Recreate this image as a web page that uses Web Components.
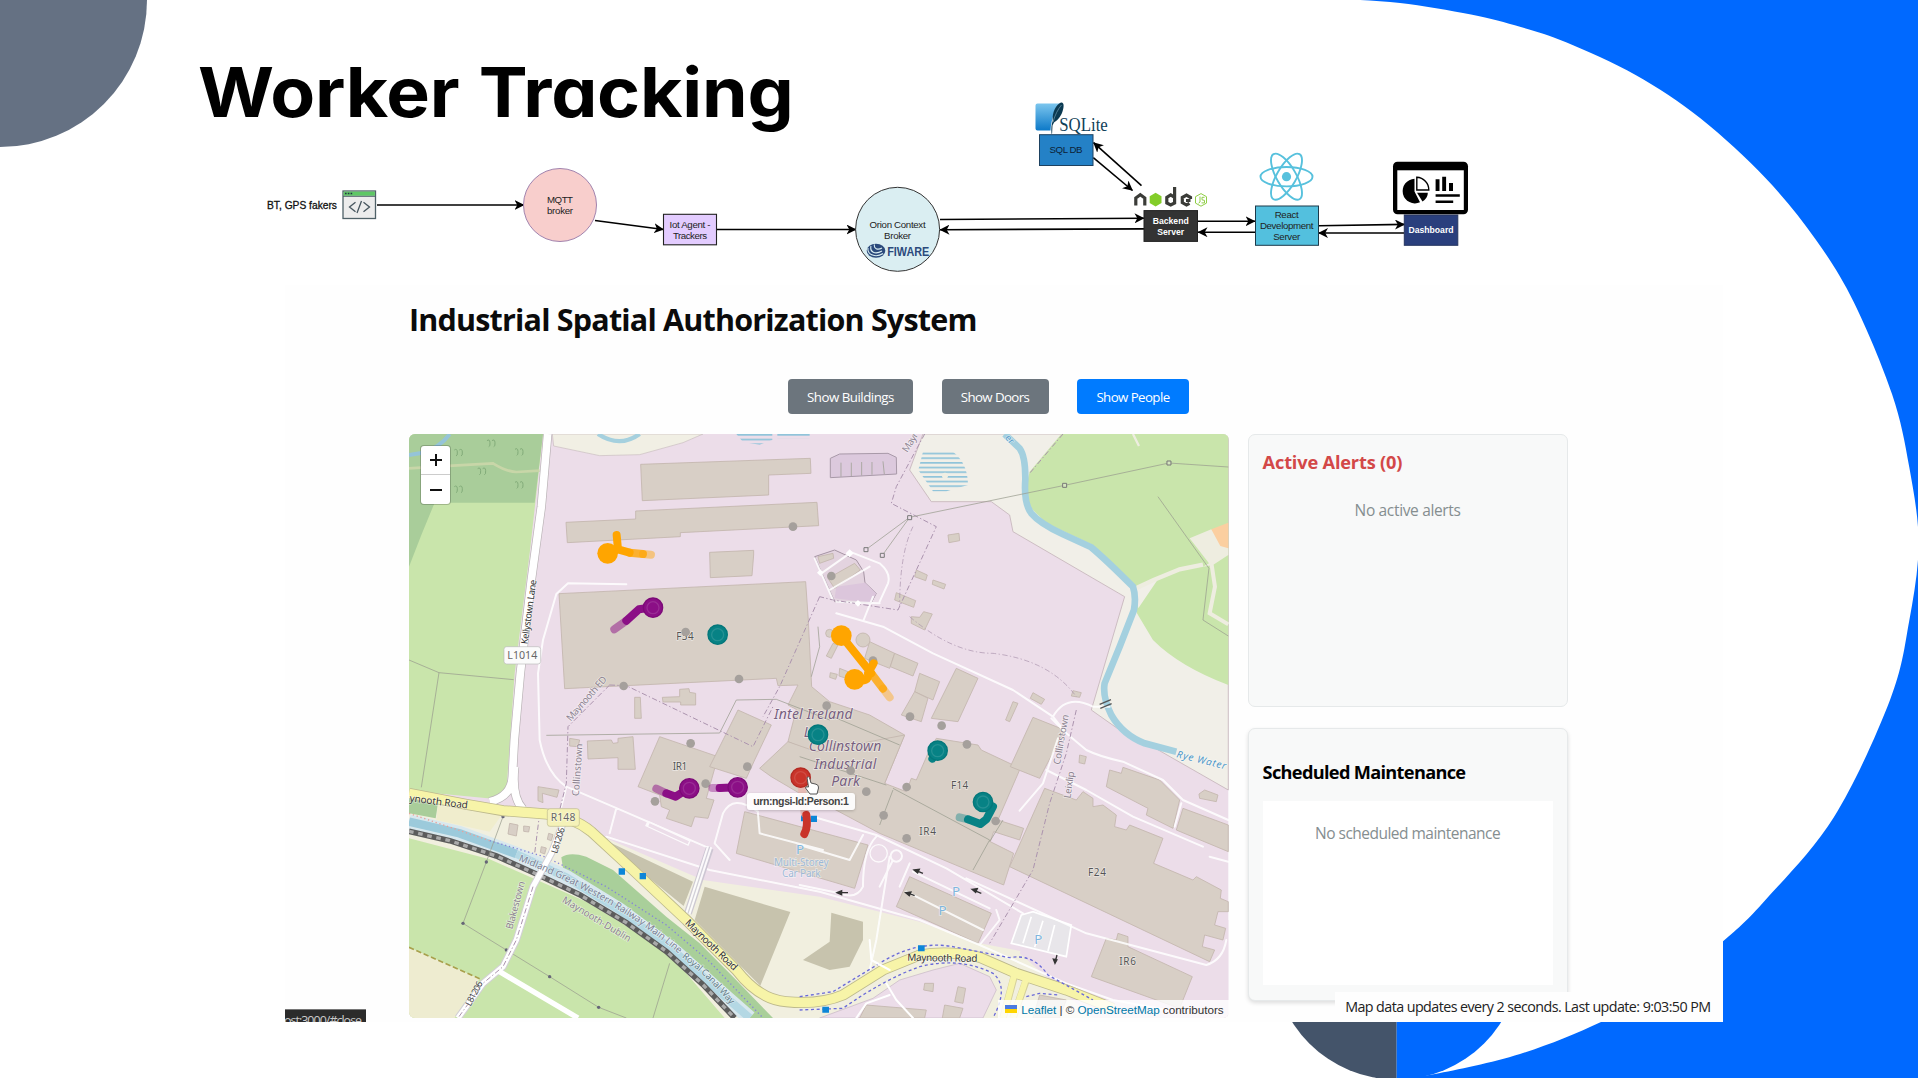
<!DOCTYPE html>
<html lang="en">
<head>
<meta charset="utf-8">
<title>Worker Tracking</title>
<style>
html,body{margin:0;padding:0;width:1918px;height:1078px;overflow:hidden;background:#fff}
</style>
</head>
<body>
<tracking-slide></tracking-slide>
<script>
const define = (name, html, setup) => customElements.define(name, class extends HTMLElement {
  constructor() {
    super();
    const t = document.createElement('template');
    t.innerHTML = html;
    this.attachShadow({mode: 'open'}).append(t.content.cloneNode(true));
  }
  connectedCallback() { if (setup) setup.call(this, this.shadowRoot); }
});

/* One line of text tracked out (or in) to a given width */
define('fit-text', `<style>:host{display:block;white-space:nowrap;width:max-content}</style><span><slot></slot></span>`, function (root) {
  const span = root.querySelector('span');
  const want = +this.getAttribute('w');
  const n = this.textContent.length;
  this.style.letterSpacing = ((want - span.offsetWidth) / n) + 'px';
});

/* Slide backdrop: blue field, white blob, corner discs */
define('slide-backdrop', `
<style>:host{display:block;position:absolute;inset:0}svg{display:block}</style>
<svg width="1918" height="1078" viewBox="0 0 1918 1078">
  <path d="M1300 0H1918V1078H1396.700V500H1300Z" fill="#0069ff"/>
  <path id="blob" fill="#fff"/>
  <circle r="147" fill="#657183"/>
  <path d="M1396.7 832.3A123.7 123.7 0 0 0 1396.7 1079.7Z" fill="#44546a"/>
  <path d="M1396.7 832.3A123.7 123.7 0 0 1 1396.7 1079.7Z" fill="#0069ff"/>
</svg>`, root => {
  const p = [[1340,-1],[1400,3],[1471,14.5],[1520.8,27],[1566.7,42.5],[1635.6,75],[1700.7,118.6],[1765.7,178.3],[1815.5,239.2],[1853.7,302],[1892,394],[1909.2,466.8],[1918.6,543],[1909.2,621],[1890,700],[1834,817],[1765.4,900],[1723,941.3],[1665,985],[1601,1022],[1520,1054],[1435,1074],[1396,1078]];
  let d = `M0 -1H${p[0][0]}`;
  for (let i = 0; i < p.length - 1; i++) {
    const a = p[i - 1] || p[i], b = p[i], c = p[i + 1], e = p[i + 2] || c;
    d += `C${b[0] + (c[0] - a[0]) / 6} ${b[1] + (c[1] - a[1]) / 6} ${c[0] - (e[0] - b[0]) / 6} ${c[1] - (e[1] - b[1]) / 6} ${c[0]} ${c[1]}`;
  }
  root.getElementById('blob').setAttribute('d', d + 'L1396 1079H0Z');
});

/* Data-flow diagram: nodes on a free canvas, in slide coordinates */
define('flow-diagram', `
<style>
:host{display:block}svg{display:block}
text{font:9.700px "Liberation Sans",Arial,sans-serif;fill:#222;text-anchor:middle}
.b{font-weight:bold;fill:#fff;font-size:9.500px}
.a line{stroke:#000;stroke-width:1.6;marker-end:url(#h)}
</style>
<svg width="1230" height="180" viewBox="260 100 1230 180">
  <defs>
    <marker id="h" viewBox="0 0 10 10" refX="9.5" refY="5" markerWidth="10" markerHeight="10" markerUnits="userSpaceOnUse" orient="auto"><path d="M0 0L10 5L0 10L2.8 5Z"/></marker>
    <linearGradient id="sq" x2="0" y2="1"><stop offset="0" stop-color="#7cc6ee"/><stop offset="1" stop-color="#0c79c8"/></linearGradient>
  </defs>
  <g class="a">
    <line x1="377" y1="205" x2="524" y2="205"/><line x1="595" y1="220.5" x2="663.5" y2="229.5"/>
    <line x1="717" y1="229.5" x2="856" y2="229.5"/>
    <line x1="940" y1="219.5" x2="1144" y2="218.3"/><line x1="1144" y1="228.9" x2="940" y2="229.7"/>
    <line x1="1093.3" y1="157.7" x2="1132.5" y2="190.5"/><line x1="1141.5" y1="185.7" x2="1093.5" y2="142.7"/>
    <line x1="1197.6" y1="221.2" x2="1255" y2="221.2"/><line x1="1255" y1="232.2" x2="1198" y2="232.2"/>
    <line x1="1318.5" y1="225.7" x2="1404.5" y2="224.4"/><line x1="1404" y1="233" x2="1318.5" y2="233"/>
  </g>
  <text x="302" y="208.7" textLength="70" lengthAdjust="spacingAndGlyphs" style="font-size:10.500px;fill:#111;stroke:#111;stroke-width:.3">BT, GPS fakers</text>
  <rect x="343" y="191" width="32.5" height="27.5" fill="#ececec" stroke="#4f6168" stroke-width="1.3"/>
  <rect x="343.6" y="191.6" width="31.3" height="4.2" fill="#5ec765"/><path d="M343 196.3h32.5" stroke="#4f6168"/>
  <path d="M345 193.6h1.6M347.8 193.6h1.6M350.6 193.6h1.6" stroke="#234" stroke-width="1.5"/>
  <path d="M355.500 202.300l-6 4.700l6 4.700M363.500 202.300l6 4.700l-6 4.700M361.500 201l-4.500 12" fill="none" stroke="#46555e" stroke-width="1.3"/>
  <circle cx="560" cy="205" r="36.5" fill="#f8cecc" stroke="#a183ae"/>
  <text x="560" y="202.8" textLength="26">MQTT</text><text x="560" y="214.3" textLength="26">broker</text>
  <rect x="663.5" y="214.300" width="53" height="30.500" fill="#e3ccff" stroke="#222" stroke-width="1.1"/>
  <text x="690" y="227.5" textLength="41">Iot Agent -</text><text x="690" y="239" textLength="34">Trackers</text>
  <circle cx="897.6" cy="229.3" r="42" fill="#daeef2" stroke="#333"/>
  <text x="897.6" y="227.5" textLength="56">Orion Context</text><text x="897.6" y="239" textLength="27">Broker</text>
  <ellipse cx="876" cy="250.800" rx="9.300" ry="7" fill="#2b4a7c"/>
  <path d="M871 246c-1.500 6 4 9 11 5M874.500 244.500c-1 4 3 6 7.500 3.500M868 248c-1 7 8 10 15 5.500" fill="none" stroke="#daeef2" stroke-width="1.100"/>
  <text x="908.200" y="256" textLength="42" lengthAdjust="spacingAndGlyphs" style="font:bold 13px 'Liberation Sans',Arial,sans-serif;fill:#2b4a7c">FIWARE</text>
  <path d="M1037.500 103.500h22.500c-5 6-8.500 14-9.500 27h-13a2 2 0 0 1-2-2v-23a2 2 0 0 1 2-2Z" fill="url(#sq)"/>
  <path d="M1051.500 134c-.5-6 0-10 1.200-13C1052 112 1056 105 1061 102.600c3.500-.6 3 5 1.500 9-2 6-6 9.500-8.500 11l-1.500 3-.4 8Z" fill="#0b3a52"/><path d="M1053 122c2-7 5-13 8.500-17" fill="none" stroke="#7fa9bd" stroke-width=".6"/>
  <text x="1083.500" y="130.700" textLength="48.500" lengthAdjust="spacingAndGlyphs" style="font:18px 'Liberation Serif',serif;fill:#0f4058">SQLite</text>
  <rect x="1039.500" y="134.700" width="53.500" height="30.800" fill="#2481c6" stroke="#1d4160"/>
  <text x="1066" y="153" textLength="33" style="fill:#0c2136">SQL DB</text>
  <g fill="none" stroke="#3b3c38" stroke-width="3.200">
    <path d="M1135.800 205.500v-7.500l4.500-3.200 4.500 3.200v7.500"/>
    <path d="M1174.600 187v16l-3.900 2-3.900-2v-5.600l3.900-2.400 3.900 2.400"/>
    <path d="M1190.500 199v-1.500l-4-2.300-4.200 2.300v5l4.200 2.500 3-1.700M1186 200.500h4.500"/>
  </g>
  <path d="M1155.600 192.800l5.900 3.400v6.800l-5.900 3.400-5.900-3.400v-6.800Z" fill="#83cd29"/>
  <path d="M1201 193.600l5.500 3.100v6.400l-5.500 3.100-5.500-3.100v-6.400Z" fill="none" stroke="#8fce45" stroke-width="1"/>
  <path d="M1200 196.500v5.500l-1.500 1.200M1204.500 197.300h-2.500v2.500l2.500.6v2.500h-3" fill="none" stroke="#8fce45" stroke-width="1"/>
  <rect x="1144" y="210.600" width="53.500" height="30.800" fill="#333" stroke="#222"/>
  <text class="b" x="1170.700" y="223.500" textLength="36" lengthAdjust="spacingAndGlyphs">Backend</text><text class="b" x="1170.700" y="235" textLength="27" lengthAdjust="spacingAndGlyphs">Server</text>
  <g fill="none" stroke="#57c1dd" stroke-width="1.900">
    <ellipse cx="1286.500" cy="176.700" rx="26" ry="9.700"/>
    <ellipse cx="1286.500" cy="176.700" rx="26" ry="9.700" transform="rotate(60 1286.500 176.700)"/>
    <ellipse cx="1286.500" cy="176.700" rx="26" ry="9.700" transform="rotate(120 1286.500 176.700)"/>
  </g><circle cx="1286.500" cy="176.700" r="4.600" fill="#57c1dd"/>
  <rect x="1255.500" y="206" width="63" height="39.300" fill="#53c0de" stroke="#1d3a4a"/>
  <text x="1286.700" y="217.900" textLength="24">React</text><text x="1286.700" y="228.800" textLength="53.500">Development</text><text x="1286.700" y="240.300" textLength="27">Server</text>
  <rect x="1404.300" y="215" width="53.500" height="30.300" fill="#2a3f7d" stroke="#26355f"/>
  <text class="b" x="1431" y="233" textLength="45" lengthAdjust="spacingAndGlyphs">Dashboard</text>
  <rect x="1393" y="161.700" width="75" height="52.600" rx="4.500"/><rect x="1397.300" y="170.300" width="66.500" height="39.700" fill="#fff"/>
  <path d="M1414.500 191.500V178.800a12.300 12.300 0 1 0 5.500 23.500Z"/>
  <path d="M1416.800 190V177.300a12.500 12.500 0 0 1 12 12.700Z" fill="#fff" stroke="#000" stroke-width="1.400"/>
  <path d="M1417 192.800h10.800c0 4-2.500 7-5.300 8.800Z"/>
  <path d="M1435.600 179.300h3.900v11.700h-3.900ZM1442.200 176.700h3.900v14.300h-3.900ZM1449 183h4v8h-4ZM1435.600 194.300h24.200v2.500h-24.200ZM1435.600 200.500h17.600v2.500h-17.600Z"/>
</svg>`);

/* Street map artwork */
const bld = list => list.split('|').map(p => `<polygon points="${p}"/>`).join('');
define('street-map', `
<style>
:host{display:block}svg{display:block}
.bd{fill:#d8cfc6;stroke:#c3b6ad;stroke-width:2.500}
.w{fill:none;stroke:#fff;stroke-width:6;stroke-linecap:round;stroke-linejoin:round}
.ad{fill:none;stroke:#ab93ae;stroke-width:3;stroke-dasharray:16 7 4 7}
.gl{fill:none;stroke:#999c8e;stroke-width:2.200}
.pa{fill:none;stroke:#6a6ad8;stroke-width:4;stroke-dasharray:9 8}
text{font:30px "Noto Sans",sans-serif;fill:#555;text-anchor:middle;stroke:#fff;stroke-opacity:.5;stroke-width:4;paint-order:stroke}
.s{font-size:29px;fill:#8c8290}
.it{font-style:italic;fill:#775f7f;font-size:42px}
.pk{fill:#7fb6de;font-size:40px}
.sq{fill:#0d86d8}
.tr{fill:none;stroke-linecap:round;stroke-linejoin:round;stroke-width:24}
</style>
<svg width="819.300" height="584" viewBox="28 42 2458 1752" preserveAspectRatio="none">
<defs>
  <pattern id="hz" width="20" height="14" patternUnits="userSpaceOnUse"><rect width="20" height="5" fill="#8fc4da"/></pattern>
  <path id="gw" d="M356 1322C520 1385 700 1480 850 1612"/>
  <path id="rc" d="M846 1612Q940 1680 1020 1790"/>
</defs>
<rect x="28" y="42" width="2458" height="1752" fill="#ecdde9"/>
<path d="M28 42H430L390 400L345 760L322 1090Q318 1112 280 1136L28 1112Z" fill="#c9e5ab"/>
<path d="M28 42H430L405 248H105L65 345L28 440Z" fill="#a9cd9a"/>
<path d="M28 105L60 100Q120 85 150 42" fill="none" stroke="#95c4d8" stroke-width="12"/>
<path d="M28 145L160 137L280 130Q320 155 350 156L420 152" fill="none" stroke="#c8d6a8" stroke-width="8"/>
<path class="gl" d="M28 720L118 758L342 779M118 758L65 1102"/>
<g fill="none" stroke="#82ab78" stroke-width="3"><path id="tf" d="M262 62q8-6 9 6t-4 12M277 62q8-6 9 6t-4 12"/><use href="#tf" x="-98" y="28"/><use href="#tf" x="84" y="26"/><use href="#tf" x="-28" y="84"/><use href="#tf" x="84" y="125"/><use href="#tf" x="-98" y="138"/></g>
<!-- river plain and fields -->
<path d="M458 42L462 78L600 107L720 104L850 68L910 42Z" fill="#f1efe4" stroke="#c9bcc0" stroke-width="2"/>
<path d="M595 42Q660 85 720 42" fill="none" stroke="#a5d0de" stroke-width="13"/>
<path d="M1010 42H1118V60L1080 74L1030 66ZM1133 42H1230V55H1133Z" fill="url(#hz)"/>
<path d="M1570 42L1530 150L1595 245H1775L1830 285L1840 335L2175 530L2075 870L2160 930L2250 975L2486 1110V42Z" fill="#f1efe8" stroke="#c5b5ba" stroke-width="2.500"/>
<path d="M1985 42L1890 155L1880 195L1890 260L1940 310L2080 375L2200 495L2212 580L2260 660Q2340 740 2486 795V42Z" fill="#c9e5ab"/>
<path d="M2204 500Q2250 492 2275 478L2216 565Z" fill="#f1efe8"/>
<path d="M2212 503L2262 480L2340 448L2410 434" fill="none" stroke="#eeede0" stroke-width="13"/>
<path d="M2370 355L2435 328L2486 385V405L2440 435L2410 440L2428 430Z" fill="#eeede0"/>
<path d="M2436 434L2446 500L2430 580L2486 613" fill="none" stroke="#eeede0" stroke-width="12"/>
<path d="M2435 328L2486 308V385L2462 378Z" fill="#fbcfa0"/>
<path class="gl" d="M2275 230L2428 445L2410 600L2486 648" stroke="#b0b69a"/>
<path d="M2200 42L2218 78" stroke="#eeede0" stroke-width="7"/>
<path d="M1570 95H1660Q1705 130 1705 195L1640 214H1600L1556 150Z" fill="url(#hz)"/><circle cx="1636" cy="167" r="9" fill="#f1efe4"/>
<path d="M1815 42L1860 85Q1878 110 1877 180Q1872 250 1895 280Q1920 310 1990 343L2075 382Q2120 420 2200 500Q2210 530 2203 570L2160 680L2115 790Q2108 830 2135 885Q2170 945 2235 970L2330 995" fill="none" stroke="#a4d0df" stroke-width="20"/>
<!-- southwest fields -->
<path d="M28 1130L320 1160L540 1210L620 1255L910 1380L1260 1430L1560 1505L1740 1570L1900 1600L1960 1690L2080 1794H28Z" fill="#f1efdf"/>
<path d="M28 1125L115 1150L108 1195L28 1180Z" fill="#a9cd9a"/>
<path d="M115 1155L310 1180L270 1235L110 1200Z" fill="#f0edcd"/>
<path d="M28 1255L270 1318L400 1375L560 1445L700 1530L830 1625L975 1794H28Z" fill="#c9e5ab"/>
<path d="M28 1582L240 1676L165 1794H28Z" fill="#eeecd0"/>
<path d="M28 1582L240 1676" stroke="#a8a04c" stroke-width="5" stroke-dasharray="16 8"/>
<path d="M485 1312Q510 1295 560 1310L640 1350L800 1490L900 1570L1000 1670L1120 1794H1040L850 1610L650 1450L490 1345Z" fill="#a9cf9a"/>
<path d="M620 1262L880 1385L852 1458L700 1335ZM915 1400L1172 1476L1082 1697L885 1500ZM1295 1478L1390 1505V1560L1350 1640L1290 1650L1210 1620L1290 1565Z" fill="#c7c3ad"/>
<path d="M1500 1680L1600 1650L1680 1630L1770 1670L1790 1710L1750 1794H1260L1420 1735Z" fill="#ecdde9" stroke="#c5b5c4" stroke-width="2"/>
<path d="M1860 1600L1940 1670L2020 1720L2330 1794H2486V1500L1900 1500Z" fill="#ecdde9"/>
<!-- canal and railway -->
<path d="M28 1205L180 1240L350 1302L500 1372L660 1470L820 1590L960 1715L1050 1794" fill="none" stroke="#d8e8ee" stroke-width="44"/>
<path d="M28 1205L180 1240L350 1302" fill="none" stroke="#9ccadb" stroke-width="26"/>
<path d="M350 1302L500 1372L660 1470L820 1590L960 1715L1050 1794" fill="none" stroke="#b4d8e4" stroke-width="24"/>
<path d="M270 1262L440 1312L620 1400L800 1515L930 1625L1090 1794" fill="none" stroke="#8585d8" stroke-width="4" stroke-dasharray="4 8"/>
<path d="M28 1180L270 1262" fill="none" stroke="#e9a09a" stroke-width="4" stroke-dasharray="4 8"/>
<path d="M28 1234L150 1262L290 1308L410 1362L540 1424L680 1508L800 1594L910 1694L1005 1794" fill="none" stroke="#5c5c5c" stroke-width="17"/>
<path d="M28 1234L150 1262L290 1308L410 1362L540 1424L680 1508L800 1594L910 1694L1005 1794" fill="none" stroke="#aaa" stroke-width="10" stroke-dasharray="14 14"/>
<path class="gl" d="M310 1190L260 1326L190 1510L320 1590L450 1670L597 1762L680 1794M810 1630L760 1794" stroke="#a9b694"/>
<g fill="#667"><circle cx="310" cy="1190" r="5"/><circle cx="260" cy="1326" r="5"/><circle cx="190" cy="1510" r="5"/><circle cx="320" cy="1590" r="5"/><circle cx="450" cy="1670" r="5"/><circle cx="597" cy="1762" r="5"/></g>
<!-- buildings -->
<g class="bd">${bld('723,133 1232,115 1234,160 1107,165 1107,225 728,242|499,307 708,297 708,273 1252,247 1257,317 842,338 842,350 503,368|930,397 1062,391 1062,405 1057,467 932,473|478,521 1218,485 1226,600 1236,800 1290,845 1410,885 1515,945 1455,1090 1165,965 1190,868 1165,855 1195,795 1135,797 1130,775 495,806|705,832 722,832 725,895 705,895|788,832 840,830 840,808 868,806 870,817 888,820 888,855 843,855 843,846 790,846')}</g>
<g transform="translate(1200 0)">
  <path d="M92 115L120 102L265 100L290 112L291 162L92 173Z" fill="#dcc9dd" stroke="#a899a8" stroke-width="3"/><path class="gl" d="M124 128v42M155 128v40M186 126v40M217 126v38M250 124l4 38"/>
  <path d="M45 410L105 390L170 420L192 455L196 488L230 520L215 548L105 545Z" fill="#e3d3df" stroke="#a594a3" stroke-width="3"/>
  <path d="M110 500L196 488L230 520L215 548L105 535Z" fill="#dcc6dc"/>
  <g class="bd">${bld('445,345 478,340 480,362 448,368|350,450 383,465 378,482 345,470|400,480 438,493 433,507 398,493|290,518 348,542 342,562 285,540|335,590 360,592 372,575 398,582 375,630 335,610|470,745 535,775 475,905 395,895|360,760 420,785 400,840 345,815|345,815 385,835 365,905 305,885|210,665 285,700 270,745 195,715|285,700 355,730 340,768 272,740|700,818 735,838 725,853 692,835|820,812 845,818 840,832 815,828|640,845 655,850 630,905 618,900|100,670 115,675 95,715 80,708|120,745 145,755 140,775 118,768|92,758 113,763 108,778 90,772|55,410 100,400 102,415 60,430|85,475 165,430 182,450 105,505')}
  <circle cx="190" cy="660" r="21"/><circle cx="90" cy="640" r="12"/></g>
</g>
<g class="bd" transform="translate(0 870)">${bld('563,93 635,90 640,100 655,98 655,85 700,80 707,178 655,178 655,143 565,147|780,80 955,140 920,265 943,270 925,325 885,320 875,350 800,325 810,300 785,290 780,255 715,230|1015,0 1115,45 1065,150 1040,205 930,170|415,230 478,240 472,262 428,250 430,278 415,272|510,85 540,90 535,110 510,108|330,340 355,345 350,378 325,372|372,348 390,350 387,366 372,364|447,370 460,374 455,392 443,388|425,410 440,414 435,432 422,427')}</g>
<g class="bd" transform="translate(1200 870)">${bld('-35,95 50,125 315,75 255,220 320,245 335,205 350,210 385,130 410,85 535,105 545,120 662,175 595,330 672,355 660,390 582,365 572,395 642,430 612,525 240,370 90,290 0,250 -85,200 -120,175|-165,305 205,405 165,535 -190,430|330,500 575,610 535,700 290,590|735,235 830,270 850,245 880,265 880,290 910,285 950,315 945,350 980,360 990,345 1090,385 1062,460 1180,510 1190,500 1265,540 1262,565 1286,575 1286,605 1255,605 1245,645 1278,655 1270,690 1215,675 1208,710 1245,720 1230,755 630,470|920,685 950,690 955,670 985,680 985,710 1178,800 1140,895 875,800|700,22 795,60 720,205 632,170|930,180 965,190 970,172 1080,210 1140,270 1120,355 1040,315 1045,295 920,230|1150,295 1286,345 1286,425 1130,360|1215,240 1255,255 1250,275 1200,265 1198,252|840,135 860,140 855,162 838,158|375,820 402,820 400,845 372,840|475,830 498,835 490,880 465,875|435,885 490,895 480,924 428,924|200,885 380,900 375,924 180,924|720,855 800,870 780,924 700,924')}</g>
<path d="M1865 1485L1900 1475L2015 1515L2000 1610L1835 1570Z" fill="#e8e6ea" stroke="#fff" stroke-width="5"/>
<path d="M1895 1490l-25 80M1930 1502l-25 80M1965 1515l-20 78" stroke="#fff" stroke-width="5"/>
<path class="gl" d="M1480 1105L1770 1260L1720 1350M1200 1010L1460 1095M1480 1110L1440 1215M1300 890L1500 975M1810 1200L1770 1265M1255 620L1260 680L1235 770M440 946L960 939L1010 840L1130 838L1290 900" stroke="#bdacb2"/>
<!-- minor roads -->
<g opacity=".85">
<path class="w" d="M680 493L505 490L470 522L430 660L415 760L420 960Q440 1060 500 1100L640 1160L930 1285M500 1100L485 1160M650 1165L630 1240M620 1250L930 1350L1260 1415L1560 1500L1740 1575L2000 1690L2140 1740L2300 1770M1310 580L1450 620L1600 700L1840 810L1960 890L2000 940M1960 890Q2000 820 2080 860L2130 860M1350 395L1440 430Q1475 460 1465 490L1440 545M1245 415L1300 540M1265 460L1350 400M1290 510L1410 440M1310 545L1440 550M1420 530L1392 600M1955 895L2000 940L2060 990Q2100 1010 2170 1025L2290 1080L2350 1140L2486 1200M1940 1050L2060 1110L2200 1190L2410 1280M1975 955L1930 1090L1860 1172M1240 1190L1430 1245L1640 1345L1870 1480M1700 1375L2060 1540L2420 1635Q2470 1620 2480 1560M1390 1245L1350 1320L1200 1275M1430 1250Q1390 1290 1390 1400Q1370 1440 1320 1420L1200 1395M1470 1310L1430 1560L1410 1650M1480 1320L1440 1400M1530 1330L1500 1400M1075 1180L1080 1240L1270 1290M1075 1175Q1000 1120 970 1180L945 1270L990 1320M1740 1575L1800 1500L1790 1470M1540 1355L1770 1465M1520 1415L1750 1530M2430 1310L2486 1325M2325 1220L2345 1150"/>
<circle cx="1490" cy="1308" r="17" fill="#ecdde9" stroke="#fff" stroke-width="6"/><circle cx="1437" cy="1300" r="26" fill="none" stroke="#fff" stroke-width="4"/>
<path d="M930 1285L865 1480" stroke="#c8c3d0" stroke-width="24"/><path d="M930 1280L865 1480" stroke="#fff" stroke-width="16"/><path d="M930 1280L865 1480" stroke="#cdcbd6" stroke-width="4"/>
<path d="M740 1210L870 1270" stroke="#fff" stroke-width="18"/><path d="M748 1214L866 1268" stroke="#ecdde9" stroke-width="10"/>
</g>
<path d="M2100 853l34-14M2102 865l34-14" stroke="#555" stroke-width="4"/>
<path class="ad" d="M630 795L505 920L500 1090L480 1170M630 795L680 797L1060 980L1120 860M1260 530L1140 800L1090 890M1575 42L1490 200L1475 250L1610 320L1495 570L1300 540L1260 530M2030 870L2000 1000L1950 1150L1900 1350L1770 1570M1990 42L1890 160"/>
<path d="M1530 590Q1660 700 1780 700Q1950 720 2030 830M1540 320Q1500 400 1500 560" class="ad" opacity=".7" stroke-dasharray="9 12"/>
<path class="gl" d="M1400 388L1530 292L1995 196L2308 129L2486 141M1530 292L1448 406"/>
<g fill="#ecdde9" stroke="#777" stroke-width="3"><path d="M1393 383h12v12h-12ZM1442 400h12v12h-12ZM1524 287h12v12h-12Z"/><path fill="#d5e6bf" d="M1989 190h12v12h-12ZM2302 123h12v12h-12Z"/></g>
<g fill="#fff"><path d="M1350 388l12 12-12 12-12-12ZM1262 448l10 10-10 10-10-10ZM1375 540l10 10-10 10-10-10Z"/></g>
<!-- L1014 -->
<path d="M444 42L425 260L395 480L362 760L344 960L338 1070Q335 1130 270 1145M345 1040Q335 1130 370 1168" fill="none" stroke="#b9b2b5" stroke-width="27"/>
<path d="M444 42L425 260L395 480L362 760L344 960L338 1070Q335 1130 270 1145M345 1040Q335 1130 370 1168" fill="none" stroke="#fff" stroke-width="23"/>
<path d="M490 1210L455 1300L400 1400L350 1560L310 1640L250 1690L175 1794" fill="none" stroke="#d3d0d6" stroke-width="22"/>
<path d="M490 1210L455 1300L400 1400L350 1560L310 1640L250 1690L175 1794M300 1655L535 1794" fill="none" stroke="#fff" stroke-width="16"/>
<path class="ad" d="M420 1180L405 1300M400 1400L350 1560L310 1640L250 1690L175 1794" stroke-width="2"/>
<!-- R148 -->
<g fill="none">
<path d="M28 1120L200 1153L310 1172L440 1182Q520 1190 575 1235L700 1350L860 1500L1010 1650Q1080 1740 1160 1745Q1260 1755 1330 1725L1450 1650L1560 1605Q1650 1590 1740 1612L1850 1660L2000 1710L2140 1765" stroke="#bdb98c" stroke-width="33"/>
<path d="M1845 1665L1810 1794M1880 1680L1840 1794" stroke="#d5d09a" stroke-width="22"/>
<path d="M1845 1660L1810 1794M1880 1675L1840 1794" stroke="#f7f4a8" stroke-width="18"/>
<path d="M28 1120L200 1153L310 1172L440 1182Q520 1190 575 1235L700 1350L860 1500L1010 1650Q1080 1740 1160 1745Q1260 1755 1330 1725L1450 1650L1560 1605Q1650 1590 1740 1612L1850 1660L2000 1710L2140 1765" stroke="#f7f4a8" stroke-width="28"/></g>
<path class="pa" d="M1200 1730L1300 1715L1440 1630Q1550 1560 1660 1580L1830 1613Q1900 1600 1945 1665L2080 1740M1200 1770L1330 1765Q1450 1680 1560 1640Q1680 1610 1780 1660Q1830 1700 1780 1794M1880 1730L1920 1720L1980 1725"/>
<path class="w" d="M1410 1560L1415 1620L1470 1650M1460 1690L1490 1740L1540 1794M1470 1725L1400 1750L1370 1794" stroke-width="5"/>
<g fill="#333" stroke="#333" stroke-width="4"><path d="M1345 1418h-28M1312 1418l14-6v12ZM1570 1360l-20-8M1543 1350l16-2-5 11ZM1745 1420l-20-8M1717 1408l16-2-5 11ZM1545 1427l-20-8M1518 1418l16-2-5 11ZM1972 1605l-4 16M1966 1630l-5-13 11 2Z"/></g>
<!-- labels -->
<text transform="translate(397 577) rotate(-82)" textLength="195" style="fill:#333;font-size:28px">Kellystown Lane</text>
<rect x="313" y="680" width="110" height="52" rx="8" fill="#fbfbfb" stroke="#bbb" stroke-width="2"/><text x="368" y="718" textLength="90" style="fill:#666;font-size:32px">L1014</text>
<text x="856" y="659" textLength="52">F34</text>
<text class="s" transform="translate(568 842) rotate(-49)" textLength="168">Maynooth ED</text>
<text class="s" transform="translate(1540 72) rotate(-58)" textLength="64">Mayr</text>
<text class="s" transform="translate(543 1050) rotate(-86)" textLength="158">Collinstown</text>
<text class="s" transform="translate(1994 960) rotate(-80)" textLength="152">Collinstown</text>
<text class="s" transform="translate(2018 1096) rotate(-82)" textLength="82">Leixlip</text>
<text class="s" transform="translate(357 1458) rotate(-75)" textLength="148">Blakestown</text>
<text transform="translate(484 1264) rotate(-73)" textLength="80" style="fill:#444;font-size:27px">L81206</text>
<text transform="translate(231 1725) rotate(-62)" textLength="80" style="fill:#444;font-size:27px">L81206</text>
<text transform="translate(116 1155) rotate(7)" textLength="176" style="fill:#333">ynooth Road</text>
<rect x="443" y="1166" width="96" height="53" rx="8" fill="#f5f2b8" stroke="#bdb98c" stroke-width="2"/><text x="490" y="1204" textLength="74" style="fill:#666;font-size:31px">R148</text>
<text x="841" y="1050" textLength="44">IR1</text>
<text x="1680" y="1107" textLength="52">F14</text><text x="1584" y="1245" textLength="50">IR4</text>
<text x="2092" y="1368" textLength="54">F24</text><text x="2184" y="1634" textLength="50">IR6</text>
<text transform="translate(928 1582) rotate(44)" textLength="205" style="fill:#333">Maynooth Road</text>
<text transform="translate(1628 1624) rotate(1)" textLength="210" style="fill:#333">Maynooth Road</text>
<text style="fill:#7d8296;font-size:29px;text-anchor:start"><textPath href="#gw" textLength="560">Midland Great Western Railway Main Line</textPath></text>
<text style="fill:#667f8b;font-size:28px;text-anchor:start"><textPath href="#rc" textLength="205">Royal Canal Way</textPath></text>
<text class="s" transform="translate(586 1506) rotate(31)" textLength="235">Maynooth-Dublin</text>
<text transform="translate(1824 64) rotate(50)" style="fill:#4f98c8;font-size:27px">er</text>
<text transform="translate(2403 1030) rotate(14)" textLength="152" style="fill:#4f98c8;font-style:italic">Rye Water</text>
<text class="it" x="1241" y="898" textLength="236">Intel Ireland</text><text class="it" x="1222" y="950">L</text>
<text class="it" x="1336" y="994" textLength="218">Collinstown</text><text class="it" x="1337" y="1046" textLength="186">Industrial</text><text class="it" x="1338" y="1099" textLength="86">Park</text>
<text class="pk" x="1201" y="1302">P</text><text class="pk" x="1669" y="1428">P</text><text class="pk" x="1629" y="1484">P</text><text class="pk" x="1916" y="1571">P</text>
<text x="1205" y="1338" textLength="164" style="fill:#9db9d6">Multi-Storey</text><text x="1205" y="1372" textLength="116" style="fill:#9db9d6">Car Park</text>
<!-- entrances and access points -->
<g fill="#a5a09c">${[[1180,320],[858,636],[672,798],[1018,777],[1295,468],[1420,722],[1281,857],[1531,890],[1626,917],[1702,973],[873,970],[1043,1040],[918,1091],[766,1144],[1521,1101],[1400,1115],[1353,1052],[1452,1186],[1521,1255],[1788,1203]].map(c => `<circle cx="${c[0]}" cy="${c[1]}" r="13"/>`).join('')}</g>
<path class="sq" d="M657 1345h19v19h-19ZM720 1359h19v19h-19ZM1233 1187h19v19h-19ZM1204 1185h19v19h-19ZM1555 1576h20v18h-20ZM1268 1760h20v18h-20Z"/>
<!-- people -->
<g class="tr" stroke="#ffa500"><path d="M651 345L655 388L690 398M624 400L655 388"/><path d="M690 398L730 402" opacity=".8"/><path d="M730 402L754 404" opacity=".45"/><path d="M1325 647L1415 760"/><path d="M1365 778Q1410 790 1405 760L1422 730"/><path d="M1415 760L1450 806" opacity=".8"/><path d="M1450 806L1470 832" opacity=".4"/></g>
<g fill="#ffa500"><circle cx="624" cy="400" r="31"/><circle cx="1325" cy="647" r="31"/><circle cx="1365" cy="778" r="31"/></g>
<g class="tr" stroke="#8b0f86"><path d="M760 562L718 568L680 602"/><path d="M680 602L644 628" opacity=".5"/><path d="M868 1104L828 1130L800 1120"/><path d="M800 1120L770 1106" opacity=".5"/><path d="M1014 1102L960 1104"/><path d="M960 1104L938 1104" opacity=".4"/></g>
<g fill="#8b0f86" stroke="#7c0a78" stroke-width="4"><circle cx="760" cy="563" r="29"/><circle cx="869" cy="1105" r="29"/><circle cx="1014" cy="1102" r="29"/></g>
<g class="tr" stroke="#078285"><path d="M1262 930L1258 944M1600 1012L1598 1016"/><path d="M1752 1146L1780 1160L1760 1198L1742 1212L1705 1198"/><path d="M1705 1198L1680 1192" opacity=".4"/></g>
<g fill="#078285" stroke="#04777a" stroke-width="4"><circle cx="954" cy="644" r="29"/><circle cx="1255" cy="944" r="29"/><circle cx="1614" cy="992" r="29"/><circle cx="1750" cy="1146" r="29"/></g>
<g class="tr" stroke="#c9342a"><path d="M1205 1090L1215 1180" stroke="#e8b6b0" opacity=".85"/><path d="M1220 1185Q1226 1220 1214 1242"/></g>
<circle cx="1203" cy="1073" r="29" fill="#c9342a" stroke="#b42a22" stroke-width="4"/>
<g fill="none" stroke="#fff" stroke-opacity=".12" stroke-width="4"><circle cx="760" cy="563" r="18"/><circle cx="869" cy="1105" r="18"/><circle cx="1014" cy="1102" r="18"/><circle cx="954" cy="644" r="18"/><circle cx="1255" cy="944" r="18"/><circle cx="1614" cy="992" r="18"/><circle cx="1750" cy="1146" r="18"/><circle cx="1203" cy="1073" r="18"/></g>
</svg>`);

define('zoom-control', `
<style>
:host{display:flex;flex-direction:column;width:28.500px;height:58.500px;background:#fff;border-radius:3px;box-shadow:0 0 0 1px #0003}
b{flex:1;display:grid;place-items:center}b+b{border-top:1px solid #ccc}svg{display:block}
</style>
<b><svg width="14" height="14"><path d="M1 7h12M7 1v12" stroke="#111" stroke-width="2"/></svg></b>
<b><svg width="14" height="14"><path d="M1 7h12" stroke="#111" stroke-width="2"/></svg></b>`);

define('map-panel', `
<style>
:host{display:block;position:relative;width:819.300px;height:584px;border-radius:6px;overflow:hidden;font-family:"Liberation Sans",Arial,sans-serif}
zoom-control{position:absolute;left:12px;top:11.500px}
.tip{position:absolute;left:338px;top:358.500px;height:17px;padding:0 6px;background:#ffffffe8;border-radius:3px;box-shadow:0 1px 3px #0003;font:bold 10.500px/17px "Liberation Sans",Arial,sans-serif;color:#444}
.att{position:absolute;right:0;bottom:0;height:18px;display:flex;align-items:center;gap:4px;padding:0 5px 0 7px;background:#ffffffcc;font-size:11.700px;color:#333}
.att i{font-style:normal;color:#0078a8}
.hand{position:absolute;left:394px;top:341px}
</style>
<street-map></street-map>
<zoom-control></zoom-control>
<div class="tip"><fit-text w="95">urn:ngsi-ld:Person:1</fit-text></div>
<svg class="hand" width="18" height="22" viewBox="0 0 18 22"><path d="M4 2.500Q5.500 1 6.600 3L8 8l5 1.200Q16 10 15.500 13L14 19H7L2.500 13Q2 11 5.500 12Z" fill="#fff" stroke="#555" stroke-width="1"/></svg>
<div class="att"><svg width="12" height="8"><path fill="#4c7be1" d="M0 0h12v4H0z"/><path fill="#ffd500" d="M0 4h12v4H0z"/></svg><fit-text w="202"><i>Leaflet</i> | © <i>OpenStreetMap</i> contributors</fit-text></div>`);

define('app-button', `
<style>:host{display:grid;place-items:center;height:35px;border-radius:4px;background:#6c757d;color:#fff;font:13.300px "Open Sans",sans-serif}
:host([active]){background:#007bff}</style><slot></slot>`);

define('side-card', `
<style>
:host{display:flex;flex-direction:column;box-sizing:border-box;width:320px;height:273px;padding:0 14px;background:#f8f9f9;border:1px solid #e6e9ea;border-radius:7px;font-family:"Open Sans",sans-serif}
:host([raised]){box-shadow:0 2px 4px #0002}
h3{margin:0;font-size:18.200px;line-height:24px;color:var(--head,#000);padding-top:var(--top,15px)}
.body{margin-top:var(--gap,12px);height:184px;background:var(--fill,none);display:flex;justify-content:center;color:#858e90;font-size:15.500px;line-height:24px;padding-top:var(--in,12px);box-sizing:border-box}
</style>
<h3><slot name="title"></slot></h3><div class="body"><slot></slot></div>`);

define('spatial-app', `
<style>
:host{display:flex;flex-direction:column;position:relative;width:1438px;height:737px;background:#fefefe;overflow:hidden;font-family:"Open Sans",sans-serif}
h1{margin:13px 0 0 124px;font-size:30.500px;line-height:42px;color:#0b0b0b}
nav{display:flex;gap:28.500px;margin:39px 0 0 503px}
main{display:flex;gap:19px;margin:20px 0 0 124.300px}
aside{display:flex;flex-direction:column;gap:20.500px}
.foot{position:absolute;right:0;bottom:0;height:30px;padding:0 12.500px 0 10.500px;background:#fefefe;font-size:14.300px;line-height:29px;color:#222}
.url{position:absolute;left:0;bottom:0;width:81px;height:13px;background:#2b2b2b;overflow:hidden;color:#ccc;font-size:12.500px;line-height:22px;border-top:1px solid #777;box-sizing:border-box}
.url fit-text{margin-left:-1px}
</style>
<h1><fit-text w="567.500">Industrial Spatial Authorization System</fit-text></h1>
<nav>
  <app-button style="width:125px"><fit-text w="87">Show Buildings</fit-text></app-button>
  <app-button style="width:107px"><fit-text w="69">Show Doors</fit-text></app-button>
  <app-button style="width:112px" active><fit-text w="73.500">Show People</fit-text></app-button>
</nav>
<main>
  <map-panel></map-panel>
  <aside>
    <side-card style="--head:#d34848"><fit-text slot="title" w="140">Active Alerts (0)</fit-text><fit-text w="105.500">No active alerts</fit-text></side-card>
    <side-card raised style="--top:31.500px;--gap:17px;--fill:#fff;--in:19.500px"><fit-text slot="title" w="202.500">Scheduled Maintenance</fit-text><fit-text w="185.500">No scheduled maintenance</fit-text></side-card>
  </aside>
</main>
<div class="foot"><fit-text w="365.500">Map data updates every 2 seconds. Last update: 9:03:50 PM</fit-text></div>
<div class="url"><fit-text w="77">ost:3000/#close</fit-text></div>`);

define('tracking-slide', `
<style>
:host{display:block;position:relative;width:1918px;height:1078px;overflow:hidden;background:#fff}
.col{position:relative;display:flex;flex-direction:column}
header{height:100px;padding-left:198px;font:700 68.500px/186px Inter,sans-serif;font-feature-settings:"cv11" 1;color:#000}
header fit-text{transform:scaleX(1.07);transform-origin:0 0;word-spacing:2px}
flow-diagram{margin-left:260px;height:180px}
spatial-app{margin:5px 0 0 285px}
</style>
<slide-backdrop></slide-backdrop>
<div class="col">
  <header><fit-text w="557">Worker Tracking</fit-text></header>
  <flow-diagram></flow-diagram>
  <spatial-app></spatial-app>
</div>`);
</script>
</body>
</html>
